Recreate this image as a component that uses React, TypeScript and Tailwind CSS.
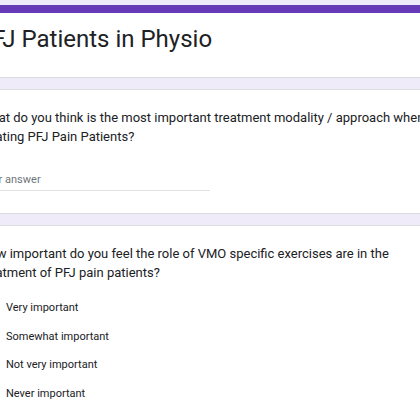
import React from "react";

const options = [
  "Very important",
  "Somewhat important",
  "Not very important",
  "Never important",
];

export default function App() {
  return (
    <div className="min-h-screen bg-[#f0ebf8] pt-[5px] overflow-hidden font-['Roboto',sans-serif] text-[#202124]">
      <div className="ml-[-45px] w-[560px] flex flex-col gap-[11px]">
        {/* Form header */}
        <div className="h-[73px] bg-white border-t-[8px] border-[#673ab7] rounded-lg border-b border-b-[#dadce0] pl-[22px] pr-6 pt-[10px]">
          <h1 className="text-[24px] leading-[32px] font-normal">
            PFJ Patients in Physio
          </h1>
        </div>

        {/* Short answer question */}
        <div className="h-[125px] bg-white rounded-lg border border-[#dadce0] px-6 pt-[18px]">
          <p className="text-[13px] leading-[19px] whitespace-nowrap">
            What do you think is the most important treatment modality / approach when
            <br />
            treating PFJ Pain Patients?
          </p>
          <div className="mt-[27px] w-[230px] border-b border-[#e0e0e0] pb-[3px]">
            <span className="block text-[11px] leading-[14px] text-[#70757a]">Your answer</span>
          </div>
        </div>

        {/* Multiple choice question */}
        <div className="h-[220px] bg-white rounded-lg border border-[#dadce0] px-6 pt-[18px]">
          <p className="text-[13px] leading-[19px] whitespace-nowrap">
            How important do you feel the role of VMO specific exercises are in the
            <br />
            treatment of PFJ pain patients?
          </p>
          <div className="mt-[16px] flex flex-col gap-[8.5px]">
            {options.map((o) => (
              <label key={o} className="flex items-center gap-[6px] h-5">
                <span className="w-5 h-5 rounded-full border-2 border-[#5f6368]" />
                <span className="text-[11px] leading-[20px]">{o}</span>
              </label>
            ))}
          </div>
        </div>
      </div>
    </div>
  );
}
